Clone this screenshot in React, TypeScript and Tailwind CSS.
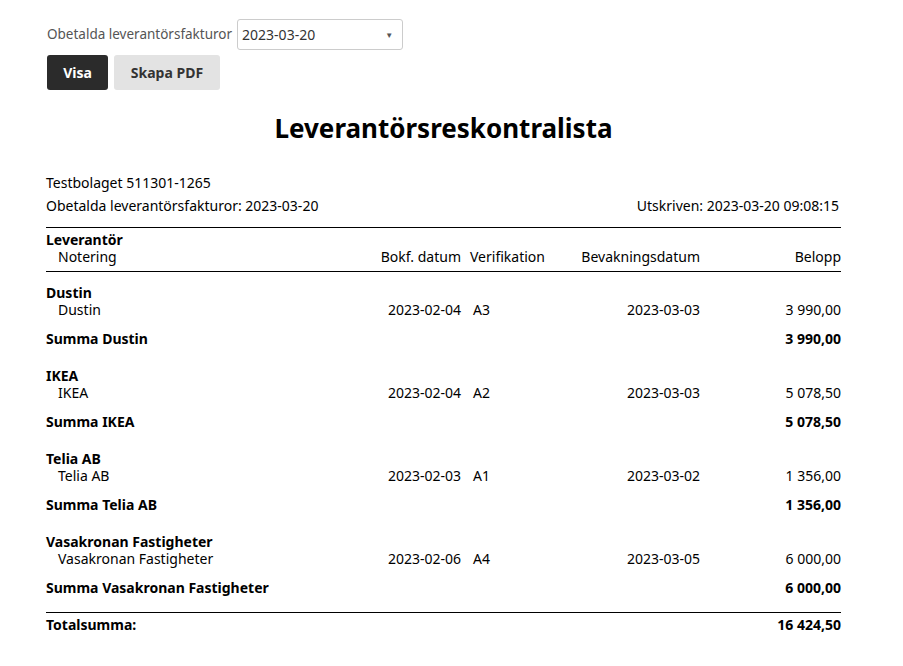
export default function App() {
  const groups = [
    { n: "Dustin", d: "2023-02-04", v: "A3", b: "2023-03-03", a: "3 990,00" },
    { n: "IKEA", d: "2023-02-04", v: "A2", b: "2023-03-03", a: "5 078,50" },
    { n: "Telia AB", d: "2023-02-03", v: "A1", b: "2023-03-02", a: "1 356,00" },
    { n: "Vasakronan Fastigheter", d: "2023-02-06", v: "A4", b: "2023-03-05", a: "6 000,00" },
  ];
  const row = "grid grid-cols-[325px_90px_100px_139px_141px]";
  return (
    <div className="w-[903px] h-[666px] bg-white text-[#222] overflow-hidden">
      <div className="pl-[47px] pt-[19px] font-['Open_Sans'] text-[14px]">
        <div className="flex items-center gap-[5px]">
          <span className="text-[#555] text-[13.5px]">Obetalda leverantörsfakturor</span>
          <div className="w-[166px] h-[31px] border border-[#ccc] rounded-[3px] flex items-center justify-between px-[4px] text-[#333]">
            <span>2023-03-20</span>
            <span className="text-[8px] text-[#555] mr-[5px]">▼</span>
          </div>
        </div>
        <div className="flex gap-[6px] mt-[5px]">
          <button className="h-[35px] w-[61px] bg-[#2b2b2b] text-white font-bold rounded-[3px]">Visa</button>
          <button className="h-[35px] w-[106px] bg-[#e3e3e3] text-[#333] font-bold rounded-[3px]">Skapa PDF</button>
        </div>
      </div>
      <div className="font-['Liberation_Sans'] text-[14px] text-black ml-[46px] w-[795px]">
        <h1 className="text-center text-[26px] font-bold mt-[22px] leading-[32px]">Leverantörsreskontralista</h1>
        <div className="mt-[30px] leading-[17px]">Testbolaget 511301-1265</div>
        <div className="flex justify-between mt-[6px] leading-[17px]">
          <span>Obetalda leverantörsfakturor: 2023-03-20</span>
          <span className="mr-[2px]">Utskriven: 2023-03-20 09:08:15</span>
        </div>
        <div className="border-t border-black mt-[13px] pt-[3px] pb-[6px] border-b leading-[17px]">
          <div className="font-bold">Leverantör</div>
          <div className={row}>
            <span className="pl-[12px]">Notering</span>
            <span className="text-right">Bokf. datum</span>
            <span className="pl-[9px]">Verifikation</span>
            <span className="text-right">Bevakningsdatum</span>
            <span className="text-right">Belopp</span>
          </div>
        </div>
        <div className="pt-[12px]">
          {groups.map((g) => (
            <div key={g.n} className="leading-[17px] mb-[20px]">
              <div className="font-bold">{g.n}</div>
              <div className={row}>
                <span className="pl-[12px]">{g.n}</span>
                <span className="text-right">{g.d}</span>
                <span className="pl-[12px]">{g.v}</span>
                <span className="text-right">{g.b}</span>
                <span className="text-right">{g.a}</span>
              </div>
              <div className="flex justify-between font-bold mt-[12px]">
                <span>Summa {g.n}</span>
                <span>{g.a}</span>
              </div>
            </div>
          ))}
        </div>
        <div className="border-t border-black flex justify-between font-bold pt-[3px] leading-[17px] -mt-[4px]">
          <span>Totalsumma:</span>
          <span>16 424,50</span>
        </div>
      </div>
    </div>
  );
}
